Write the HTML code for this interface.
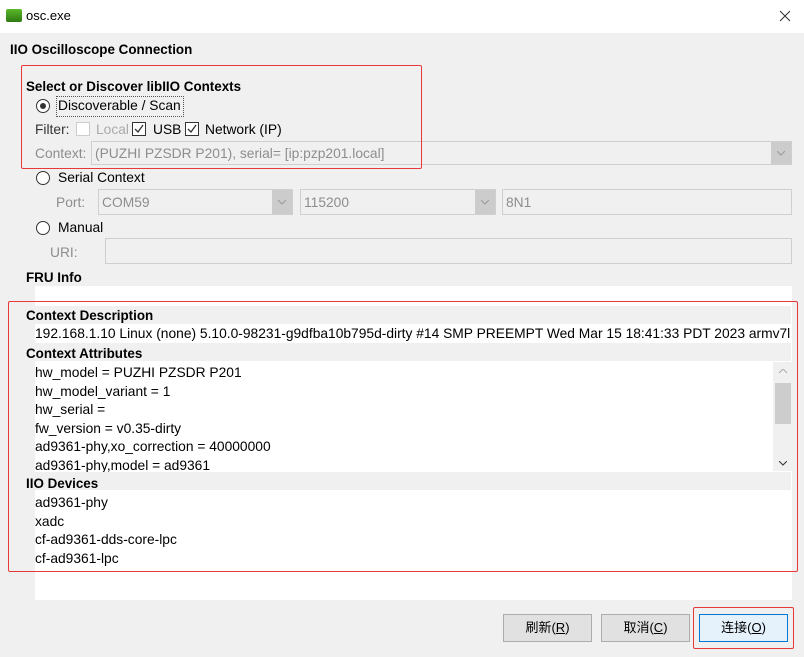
<!DOCTYPE html>
<html><head><meta charset="utf-8"><style>
*{box-sizing:border-box;margin:0;padding:0}
body{width:804px;height:657px;background:#f0f0f0;font-family:"Liberation Sans","Noto Sans CJK SC",sans-serif;font-size:13.8px;color:#000;position:relative;overflow:hidden}
.a{position:absolute;white-space:nowrap}
.b{font-weight:bold;font-size:13.4px}
.g{color:#8d8d8d}
.box{position:absolute;border:1px solid #cfcfcf;background:#f0f0f0}
.dd{position:absolute;top:0;bottom:0;right:0;width:20px;background:#cccccc}
.dd svg{position:absolute;left:6px;top:9px}
.red{position:absolute;border:1.5px solid #e8393a;border-radius:2px}
.radio{position:absolute;width:14px;height:14px;border:1px solid #333;border-radius:50%;background:#fff}
.chk{position:absolute;width:14px;height:14px;border:1px solid #333;background:#fff}
.hdr{position:absolute;left:21px;width:770px;height:18px;background:#f0f0f0}
.btn{position:absolute;top:614px;width:89px;height:28px;border:1px solid #adadad;background:#e1e1e1;text-align:center;line-height:26px;font-size:13px}
</style></head><body>
<div class="a" style="left:0;top:0;width:804px;height:33px;background:#fff"></div>
<div class="a" style="left:6px;top:9px;width:16px;height:13px;background:linear-gradient(#5cb82a,#2d7a12);border-radius:2px"></div>
<div class="a" style="left:26px;top:8px;font-size:13px">osc.exe</div>
<svg class="a" style="left:779px;top:10px" width="12" height="12"><path d="M1 1L11 11M11 1L1 11" stroke="#333" stroke-width="1"/></svg>

<div class="a b" style="left:10px;top:42px">IIO Oscilloscope Connection</div>
<div class="a b" style="left:26px;top:79px">Select or Discover libIIO Contexts</div>
<div class="radio" style="left:36px;top:99px"></div><div class="a" style="left:40px;top:103px;width:6px;height:6px;border-radius:50%;background:#333"></div>
<div class="a" style="left:56px;top:96px;width:128px;height:21px;border:1px dotted #555"></div>
<div class="a" style="left:58px;top:98px">Discoverable / Scan</div>
<div class="a" style="left:35px;top:122px;color:#333">Filter:</div>
<div class="chk" style="left:76px;top:122px;border-color:#ccc"></div>
<div class="a g" style="left:96px;top:122px;color:#aaa">Local</div>
<div class="chk" style="left:132px;top:122px"></div><svg class="a" style="left:134px;top:124px" width="10" height="10"><path d="M1 5L4 8L9 1" stroke="#333" fill="none" stroke-width="1.3"/></svg>
<div class="a" style="left:153px;top:122px">USB</div>
<div class="chk" style="left:185px;top:122px"></div><svg class="a" style="left:187px;top:124px" width="10" height="10"><path d="M1 5L4 8L9 1" stroke="#333" fill="none" stroke-width="1.3"/></svg>
<div class="a" style="left:205px;top:122px">Network (IP)</div>
<div class="a g" style="left:35px;top:146px">Context:</div>
<div class="box" style="left:91px;top:141px;width:701px;height:24px"><div class="dd"><svg width="8" height="5"><path d="M0 0L4 4L8 0" stroke="#999" fill="none"/></svg></div></div>
<div class="a g" style="left:95px;top:146px">(PUZHI PZSDR P201), serial= [ip:pzp201.local]</div>
<div class="red" style="left:21px;top:65px;width:401px;height:104px"></div>

<div class="radio" style="left:36px;top:171px"></div>
<div class="a" style="left:58px;top:170px">Serial Context</div>
<div class="a g" style="left:56px;top:195px">Port:</div>
<div class="box" style="left:98px;top:189px;width:195px;height:26px"><div class="dd"><svg width="8" height="5" style="top:10px"><path d="M0 0L4 4L8 0" stroke="#999" fill="none"/></svg></div></div>
<div class="a g" style="left:102px;top:195px">COM59</div>
<div class="box" style="left:300px;top:189px;width:196px;height:26px"><div class="dd"><svg width="8" height="5" style="top:10px"><path d="M0 0L4 4L8 0" stroke="#999" fill="none"/></svg></div></div>
<div class="a g" style="left:304px;top:195px">115200</div>
<div class="box" style="left:502px;top:189px;width:290px;height:26px"></div>
<div class="a g" style="left:506px;top:195px">8N1</div>
<div class="radio" style="left:36px;top:221px"></div>
<div class="a" style="left:58px;top:220px">Manual</div>
<div class="a g" style="left:50px;top:245px">URI:</div>
<div class="box" style="left:105px;top:238px;width:687px;height:26px"></div>
<div class="a b" style="left:26px;top:270px">FRU Info</div>

<div class="a" style="left:35px;top:286px;width:757px;height:314px;background:#fff"></div>
<div class="hdr" style="top:306px"></div>
<div class="a b" style="left:26px;top:308px">Context Description</div>
<div class="a" style="left:35px;top:326px">192.168.1.10 Linux (none) 5.10.0-98231-g9dfba10b795d-dirty #14 SMP PREEMPT Wed Mar 15 18:41:33 PDT 2023 armv7l</div>
<div class="hdr" style="top:343px"></div>
<div class="a b" style="left:26px;top:346px">Context Attributes</div>
<div class="a" style="left:773px;top:362px;width:19px;height:109px;background:#f0f0f0"></div>
<div class="a" style="left:775px;top:383px;width:16px;height:41px;background:#cdcdcd"></div>
<svg class="a" style="left:779px;top:369px" width="8" height="5"><path d="M0 4L4 0L8 4" stroke="#aaa" fill="none"/></svg>
<svg class="a" style="left:779px;top:461px" width="8" height="5"><path d="M0 0L4 4L8 0" stroke="#333" fill="none"/></svg>
<div class="a" style="left:35px;top:364px;line-height:18.5px">hw_model = PUZHI PZSDR P201<br>hw_model_variant = 1<br>hw_serial =<br>fw_version = v0.35-dirty<br>ad9361-phy,xo_correction = 40000000<br>ad9361-phy,model = ad9361</div>
<div class="hdr" style="top:472px"></div>
<div class="a b" style="left:26px;top:476px">IIO Devices</div>
<div class="a" style="left:35px;top:494px;line-height:18.5px">ad9361-phy<br>xadc<br>cf-ad9361-dds-core-lpc<br>cf-ad9361-lpc</div>
<div class="red" style="left:8px;top:301px;width:790px;height:271px"></div>

<div class="btn" style="left:503px">刷新(<u>R</u>)</div>
<div class="btn" style="left:601px">取消(<u>C</u>)</div>
<div class="btn" style="left:699px;background:#e5f1fb;border:1px solid #0078d7">连接(<u>O</u>)</div>
<div class="red" style="left:693px;top:607px;width:101px;height:42px"></div>
</body></html>
